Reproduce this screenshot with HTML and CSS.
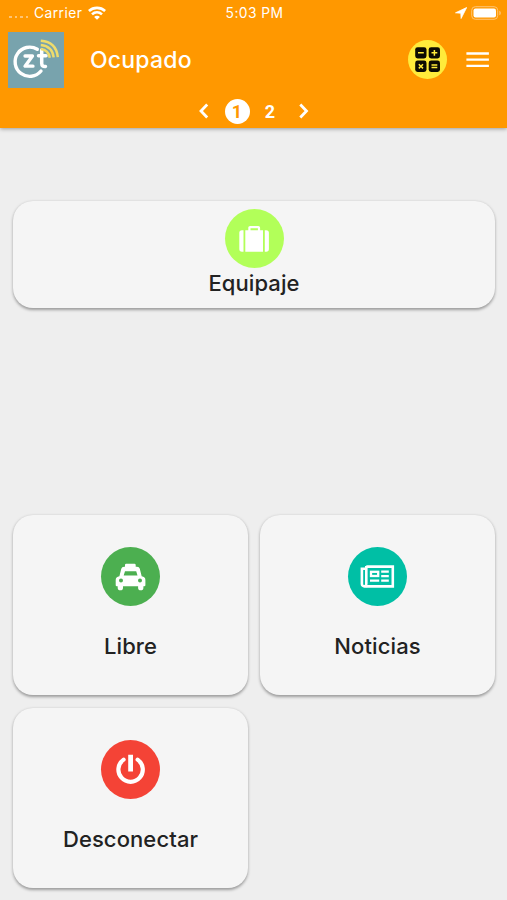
FILE: index.html
```html
<!DOCTYPE html>
<html lang="es">
<head>
    <meta charset="UTF-8">
    <meta name="viewport" content="width=device-width, initial-scale=1.0">
    <title>Ocupado</title>
    <link rel="stylesheet" href="styles.css">
</head>
<body>
    <header class="header">
        <div class="status-bar">
            <div class="carrier">
                <span class="signal"><i></i><i></i><i></i><i></i></span>
                <span>Carrier</span>
                <svg class="wifi" width="18" height="14" viewBox="0 0 18 14" fill="none" stroke="#fff" stroke-width="2.6">
                    <path d="M.9 5C5.5.8 12.5.8 17.1 5"/>
                    <path d="M4 8.4c2.9-2.7 7.1-2.7 10 0"/>
                    <path d="M9 13.8 6.1 10.9c1.6-1.5 4.2-1.5 5.8 0z" fill="#fff" stroke="none"/>
                </svg>
            </div>
            <span class="time">5:03 PM</span>
            <div class="battery">
                <svg width="12" height="12" viewBox="0 0 12 12"><path d="M11.7.5.5 5.8l5.3.4.3 5.3z" fill="#fff" stroke="#fff" stroke-width=".8" stroke-linejoin="round"/></svg>
                <svg width="31" height="14" viewBox="0 0 31 14">
                    <rect x=".7" y=".7" width="26" height="12.6" rx="3.6" fill="none" stroke="#ffc473"/>
                    <rect x="2.5" y="2.5" width="22.5" height="9" rx="2" fill="#fff"/>
                    <path d="M28.3 4.7c2 .6 2 4 0 4.6z" fill="#ffc473"/>
                </svg>
            </div>
        </div>
        <div class="toolbar">
            <svg class="logo" width="56" height="56" viewBox="0 0 56 56" fill="none" stroke="#fff" stroke-linecap="round" stroke-linejoin="round">
                <path d="M29.3 17.3A14.6 14.6 0 1 0 33 39" stroke-width="3.4"/>
                <path d="M17 24h7.5L17 34.2h8" stroke-width="3.3"/>
                <path d="M33.7 18v13.2q0 3.6 3.8 3.3M30.5 23.8h7.5" stroke-width="3.5"/>
                <g stroke="#eedc6c" stroke-width="2.5" stroke-linecap="butt">
                    <path d="M32.8 17q7.6.8 9 8.7"/>
                    <path d="M32.8 12.9q11.4 1 12.9 12.5"/>
                    <path d="M32.8 8.7q15.4 1 17 16.4"/>
                </g>
            </svg>
            <h1 class="title">Ocupado</h1>
            <svg class="calc" width="40" height="40" viewBox="0 0 40 40">
                <circle cx="19.5" cy="19.5" r="19.5" fill="#ffeb3b"/>
                <g fill="#0d0b02">
                    <rect x="7.2" y="7.2" width="11.3" height="11.3" rx="2.4"/>
                    <rect x="20.7" y="7.2" width="11.3" height="11.3" rx="2.4"/>
                    <rect x="7.2" y="20.6" width="11.3" height="11.3" rx="2.4"/>
                    <rect x="20.7" y="20.6" width="11.3" height="11.3" rx="2.4"/>
                </g>
                <path d="M10 12.8h5.8M23.5 12.8h5.8M26.4 9.9v5.8M10.8 24.2l4.2 4.2M15 24.2l-4.2 4.2M23.5 25h5.8M23.5 27.6h5.8" stroke="#ffeb3b" stroke-width="1.5"/>
            </svg>
            <svg class="menu" width="24" height="18" viewBox="0 0 24 18"><path d="M.4 2.5h22.5M.4 8.7h22.5M.4 14.9h22.5" stroke="#fff" stroke-width="2.3"/></svg>
        </div>
        <nav class="pager">
            <svg width="10" height="16" viewBox="0 0 10 16"><path d="M8.2 1.5 2 8l6.2 6.5"/></svg>
            <span class="page active">1</span>
            <span class="page">2</span>
            <svg width="10" height="16" viewBox="0 0 10 16"><path d="M1.3 1.5 7.5 8l-6.2 6.5"/></svg>
        </nav>
    </header>

    <main class="content">
        <div class="card wide">
            <svg class="icon luggage" viewBox="0 0 59 59" fill="#fff">
                <path d="M18.5 21.2v21.5H17a2.7 2.7 0 0 1-2.7-2.7V24a2.7 2.7 0 0 1 2.7-2.8zM39.8 21.2v21.5h1.4a2.7 2.7 0 0 0 2.7-2.7V24a2.7 2.7 0 0 0-2.7-2.8z"/>
                <path d="M20.3 42.7V21.2h3v-2.4c0-1 .8-1.8 1.8-1.8h8.2c1 0 1.8.8 1.8 1.8v2.4h2.9v21.5zM25.5 21.2h7.4v-1.9h-7.4z" fill-rule="evenodd"/>
            </svg>
            <span>Equipaje</span>
        </div>
        <div class="card">
            <svg class="icon taxi" viewBox="0 0 59 59" fill="#fff">
                <path fill-rule="evenodd" d="M24 19.8v-1.9q0-1.2 1.2-1.2h8.3q1.2 0 1.2 1.2v1.9h1.3q2.3 0 2.8 2l1.9 7.5q3.7.5 3.7 3.8v5.1q0 1-1.2 1h-.8v1.5a2.6 2.6 0 0 1-5.3 0v-1.5H22v1.5a2.6 2.6 0 0 1-5.3 0v-1.5h-.8q-1.2 0-1.2-1v-5.1q0-3.3 3.7-3.8l1.9-7.5q.5-2 2.8-2zM24 24.2l-1.3 4.3h13.8l-1.3-4.3zM20 31.4a2 2 0 1 0 0 4 2 2 0 1 0 0-4zM39 31.4a2 2 0 1 0 0 4 2 2 0 1 0 0-4z"/>
            </svg>
            <span>Libre</span>
        </div>
        <div class="card">
            <svg class="icon news" viewBox="0 0 59 59" fill="none" stroke="#fff">
                <path d="M18.3 19.6h26.5v19.8H16.3a2.4 2.4 0 0 1-2.4-2.4V21.7h3.5" stroke-width="2.6"/>
                <path d="M18.3 19v17.5q0 2-1 3" stroke-width="2.6"/>
                <rect x="23" y="24.8" width="7.2" height="4.2" stroke-width="2.3"/>
                <path d="M33.2 24.7h7.6M33.2 29.2h7.6M33.2 33.6h7.6M22 33.6h9.2" stroke-width="2.3"/>
            </svg>
            <span>Noticias</span>
        </div>
        <div class="card">
            <svg class="icon power" viewBox="0 0 59 59" fill="none" stroke="#fff" stroke-linecap="round">
                <path d="M22.6 19.6a12.2 12.2 0 1 0 14 0" stroke-width="4.2"/>
                <path d="M29.6 17.2v11.8" stroke-width="4.8" stroke-linecap="square"/>
            </svg>
            <span>Desconectar</span>
        </div>
    </main>
</body>
</html>
```

FILE: styles.css
```css
* {
    box-sizing: border-box;
}
body {
    margin: 0;
    height: 900px;
    background-color: #eee;
    font-family: Inter, Roboto, sans-serif;
    color: #222;
    overflow: hidden;
}
svg {
    display: block;
    flex: none;
}
.header {
    height: 128px;
    background-color: #ff9800;
    color: #fff;
    box-shadow: 0 1px 4px rgba(0, 0, 0, 0.35);
}
.status-bar {
    display: grid;
    grid-template-columns: 1fr auto 1fr;
    align-items: center;
    height: 26px;
    padding: 0 7px 0 9px;
    font-size: 13.8px;
    letter-spacing: 0.45px;
}
.carrier {
    display: flex;
    align-items: center;
    gap: 6px;
}
.signal {
    display: flex;
    gap: 3px;
    padding-top: 7px;
}
.signal i {
    width: 2.5px;
    height: 2px;
    background-color: #ffc473;
}
.battery {
    display: flex;
    align-items: center;
    justify-content: flex-end;
    gap: 4px;
    margin-right: -2px;
}
.toolbar {
    display: flex;
    align-items: center;
    height: 68px;
    padding: 0 17px 0 8px;
}
.logo {
    background-color: #78a3ad;
}
.title {
    flex: 1;
    margin: 0 0 0 26px;
    font-size: 23px;
    font-weight: 500;
    letter-spacing: 0.2px;
}
.menu {
    margin-left: 18px;
}
.pager {
    display: flex;
    align-items: center;
    justify-content: center;
    height: 34px;
}
.pager svg {
    fill: none;
    stroke: #fff;
    stroke-width: 2.8;
}
.page {
    width: 25px;
    height: 25px;
    margin: 0 4px;
    border-radius: 50%;
    text-align: center;
    font: bold 18px/25px Roboto, sans-serif;
}
.page.active {
    margin-left: 16px;
    background-color: #fff;
    color: #ff9800;
}
.page:not(.active) {
    margin-right: 16px;
}
.content {
    display: grid;
    grid-template-columns: 1fr 1fr;
    grid-template-rows: 301px 180px 180px;
    column-gap: 12px;
    row-gap: 13px;
    padding: 73px 12px 0 13px;
}
.card {
    display: flex;
    flex-direction: column;
    align-items: center;
    justify-content: space-between;
    padding: 32px 0 34px;
    background-color: #f5f5f5;
    border-radius: 20px;
    box-shadow: 0 1.5px 3px rgba(0, 0, 0, 0.35);
    font-size: 22px;
    font-weight: 450;
    letter-spacing: 0.1px;
    line-height: 30px;
}
.card.wide {
    grid-column: span 2;
    align-self: start;
    height: 107px;
    padding: 8px 0 10px;
}
.icon {
    width: 59px;
    height: 59px;
    border-radius: 50%;
}
.luggage {
    background-color: #b2ff59;
}
.taxi {
    background-color: #4caf50;
}
.news {
    background-color: #00bfa5;
}
.power {
    background-color: #f44336;
}
```
